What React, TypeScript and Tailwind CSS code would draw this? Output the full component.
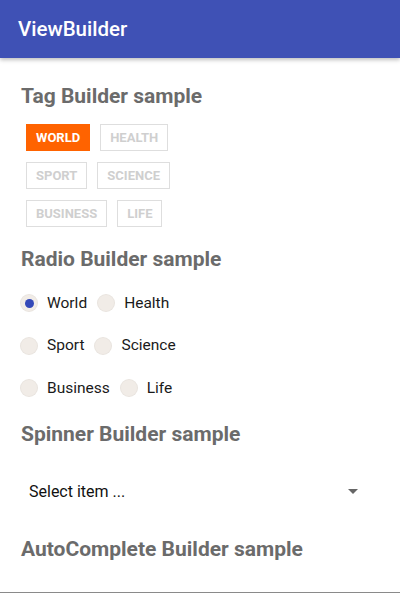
import React, { useState } from 'react';

const tagRows = [
  ['World', 'Health'],
  ['Sport', 'Science'],
  ['Business', 'Life'],
];

const radioRows = [
  ['World', 'Health'],
  ['Sport', 'Science'],
  ['Business', 'Life'],
];

const SectionTitle: React.FC<{ children: React.ReactNode; className?: string }> = ({ children, className = '' }) => (
  <h2 className={`text-[21px] leading-[24px] font-bold text-[#6b6b6b] ${className}`}>{children}</h2>
);

const Radio: React.FC<{ checked: boolean }> = ({ checked }) => (
  <span className="flex h-4 w-4 items-center justify-center rounded-full bg-[#f1ece7] shadow-[0_0_0_1px_#e9e4df]">
    {checked && <span className="h-[9px] w-[9px] rounded-full bg-[#3449b8]" />}
  </span>
);

export default function App() {
  const [tag, setTag] = useState('World');
  const [radio, setRadio] = useState('World');

  return (
    <div className="h-[593px] overflow-hidden bg-white border-b border-[#8a8a8a]" style={{ fontFamily: 'Roboto, "Noto Sans", sans-serif' }}>
      {/* App bar */}
      <div className="flex h-[58px] items-center bg-[#3f51b5] px-[18px] shadow-[0_2px_4px_rgba(0,0,0,0.25)]">
        <h1 className="text-[20.5px] font-medium text-white">ViewBuilder</h1>
      </div>

      <div className="px-[21px]">
        {/* Tags */}
        <SectionTitle className="mt-[26px]">Tag Builder sample</SectionTitle>
        <div className="mt-4 flex flex-col gap-[11px] pl-[5px]">
          {tagRows.map((row) => (
            <div key={row[0]} className="flex gap-[10px]">
              {row.map((t) => {
                const active = tag === t;
                return (
                  <button
                    key={t}
                    onClick={() => setTag(t)}
                    className={`h-[27px] px-[9px] text-[13px] font-bold uppercase border-[1.5px] ${
                      active ? 'bg-[#ff6300] border-[#ff6300] text-white' : 'bg-white border-[#dedede] text-[#cfcfcf]'
                    }`}
                  >
                    {t}
                  </button>
                );
              })}
            </div>
          ))}
        </div>

        {/* Radios */}
        <SectionTitle className="mt-[20px]">Radio Builder sample</SectionTitle>
        <div className="mt-[11px] flex flex-col">
          {radioRows.map((row) => (
            <div key={row[0]} className="flex h-[42.5px] items-center gap-[11px]">
              {row.map((r) => (
                <label key={r} className="flex items-center gap-[10px] cursor-pointer" onClick={() => setRadio(r)}>
                  <Radio checked={radio === r} />
                  <span className="text-[15.5px] text-[#1a1a1a]">{r}</span>
                </label>
              ))}
            </div>
          ))}
        </div>

        {/* Spinner */}
        <SectionTitle className="mt-[12px]">Spinner Builder sample</SectionTitle>
        <div className="mt-[22px] flex h-12 items-center justify-between pl-2 pr-[21px]">
          <span className="text-[16px] text-[#111]">Select item ...</span>
          <svg width="10" height="5" viewBox="0 0 10 5">
            <path d="M0 0h10L5 5z" fill="#666" />
          </svg>
        </div>

        {/* AutoComplete */}
        <SectionTitle className="mt-[21px]">AutoComplete Builder sample</SectionTitle>
        <div className="mt-[28px] pl-[6px] text-[16px] text-[#bdbdbd]">Select item ...</div>
      </div>
    </div>
  );
}
